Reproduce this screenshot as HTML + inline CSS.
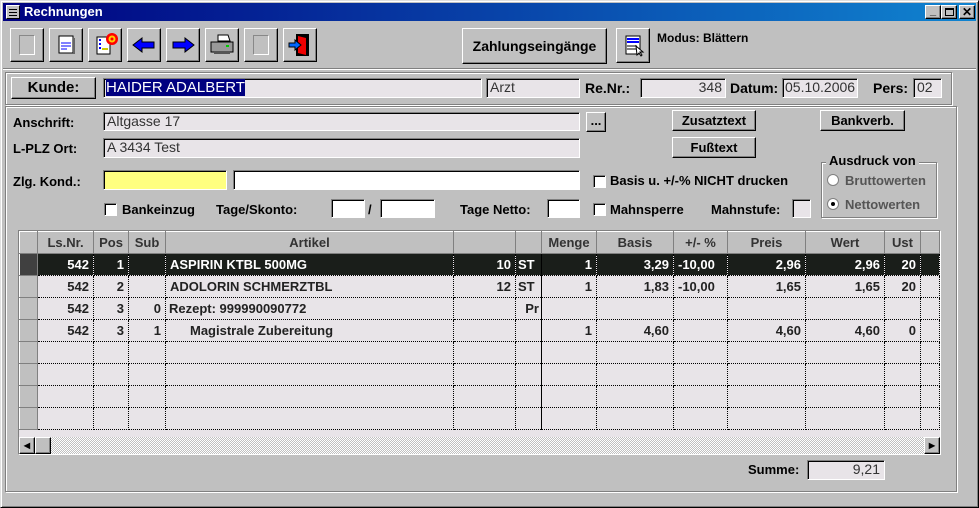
<!DOCTYPE html>
<html><head><meta charset="utf-8"><style>
*{box-sizing:border-box;margin:0;padding:0}
body{width:979px;height:508px;background:#c0c0c0;font-family:"Liberation Sans",Arial,sans-serif;font-size:13px;font-weight:bold;color:#000;position:relative;overflow:hidden}
.a{position:absolute}
.win{left:0;top:0;width:979px;height:508px;border:1px solid #dfdfdf;border-right-color:#000;border-bottom-color:#000;box-shadow:inset 1px 1px #fff,inset -1px -1px #808080}
.title{left:3px;top:3px;width:973px;height:18px;background:linear-gradient(90deg,#000080,#1084d0);color:#fff;font-weight:bold;font-size:13px;line-height:18px;padding-left:21px}
.btn{background:#c0c0c0;border:1px solid #fff;border-right-color:#000;border-bottom-color:#000;box-shadow:inset -1px -1px #808080;text-align:center}
.fld{background:#e8e4e8;border:1px solid #808080;border-right-color:#fff;border-bottom-color:#fff;box-shadow:inset 1px 1px #000;padding-left:3px;line-height:17px;white-space:nowrap;overflow:hidden;color:#333;font-weight:normal}
.grp{border:1px solid #808080;box-shadow:1px 1px #fff,inset 1px 1px #fff}
.cb{width:13px;height:13px;background:#fff;border:1px solid #808080;border-right-color:#fff;border-bottom-color:#fff;box-shadow:inset 1px 1px #000}
table{border-collapse:collapse;table-layout:fixed;font-size:13px}
td{height:22px;border-right:1px dotted #000;border-bottom:1px dotted #000;padding:0 4px;white-space:nowrap;overflow:hidden;color:#222}
th{height:22px;background:#c0c0c0;border:1px solid #fff;border-right-color:#808080;border-bottom-color:#808080;color:#333}
tr.sel td{background:#1a1e1a;color:#fff}
td.r{text-align:right}
td.h{background:#c0c0c0;border:1px solid #fff;border-right-color:#808080;border-bottom-color:#808080}
tr.sel td.h{background:#404040}
</style></head><body>
<div class="a win"></div>
<div class="a title">Rechnungen</div>
<div class="a" style="left:6px;top:5px;width:14px;height:14px;background:#c0c0c0;border:1px solid #fff;border-right-color:#000;border-bottom-color:#000"><div style="margin:3px 2px;height:1px;background:#000;box-shadow:0 3px #000,0 6px #000"></div></div>
<div class="a btn" style="left:925px;top:5px;width:16px;height:14px;font-size:11px;line-height:10px;font-weight:bold">_</div>
<div class="a btn" style="left:941px;top:5px;width:16px;height:14px"><div style="margin:2px 3px;width:9px;height:8px;border:1px solid #000;border-top-width:2px"></div></div>
<div class="a btn" style="left:959px;top:5px;width:16px;height:14px;font-size:12px;line-height:12px;font-weight:bold">✕</div>

<!-- toolbar -->
<div class="a btn" style="left:10px;top:28px;width:34px;height:34px"><div style="margin:6px 8px;width:16px;height:20px;border:1px solid #888;border-right-color:#fff;border-bottom-color:#fff"></div></div>
<div class="a btn" style="left:49px;top:28px;width:34px;height:34px"><svg width="32" height="32"><rect x="9" y="7" width="14" height="17" fill="#fff" stroke="#000"/><path d="M11 14h10M11 17h10M11 20h6" stroke="#00f"/><rect x="23" y="9" width="2" height="16" fill="#666"/></svg></div>
<div class="a btn" style="left:88px;top:28px;width:34px;height:34px"><svg width="32" height="32"><rect x="8" y="8" width="13" height="17" fill="#fff" stroke="#000"/><path d="M10 11h2M10 15h2M10 19h2" stroke="#00f" stroke-width="2"/><path d="M13 20h6" stroke="#cc0" stroke-width="2"/><circle cx="23" cy="10" r="6" fill="#f00"/><circle cx="23" cy="10" r="3.5" fill="#fc0"/><circle cx="23" cy="10" r="1.5" fill="#f00"/></svg></div>
<div class="a btn" style="left:127px;top:28px;width:34px;height:34px"><svg width="32" height="32"><path d="M5 16l9-7v4h12v6H14v4z" fill="#00f" stroke="#000"/></svg></div>
<div class="a btn" style="left:166px;top:28px;width:34px;height:34px"><svg width="32" height="32"><path d="M27 16l-9-7v4H6v6h12v4z" fill="#00f" stroke="#000"/></svg></div>
<div class="a btn" style="left:205px;top:28px;width:34px;height:34px"><svg width="32" height="32"><path d="M12 6h10l2 6H12z" fill="#fff" stroke="#000"/><rect x="5" y="13" width="22" height="10" fill="#999" stroke="#000"/><rect x="8" y="22" width="16" height="3" fill="#555"/><rect x="20" y="16" width="3" height="2" fill="#0c0"/></svg></div>
<div class="a btn" style="left:244px;top:28px;width:34px;height:34px"><div style="margin:6px 8px;width:16px;height:20px;border:1px solid #888;border-right-color:#fff;border-bottom-color:#fff"></div></div>
<div class="a btn" style="left:283px;top:28px;width:34px;height:34px"><svg width="32" height="32"><rect x="12" y="5" width="13" height="22" fill="#000"/><path d="M14 7l8 2v17l-8-2z" fill="#e00"/><path d="M5 14h6v-3l6 5-6 5v-3H5z" fill="#06f" stroke="#000"/></svg></div>

<div class="a btn" style="left:462px;top:28px;width:145px;height:36px;line-height:34px;font-size:14px">Zahlungseingänge</div>
<div class="a btn" style="left:616px;top:28px;width:34px;height:35px"><svg width="32" height="32"><rect x="9" y="7" width="14" height="18" fill="#fff" stroke="#000"/><path d="M10 10h12M10 13h12" stroke="#00f" stroke-width="2"/><path d="M10 17h10M10 20h10" stroke="#000"/><path d="M19 17l7 6-3 0 2 3-1 1-2-3-2 2z" fill="#fff" stroke="#000"/></svg></div>
<div class="a" style="left:657px;top:31px;font-size:12px;font-weight:bold">Modus: Blättern</div>

<div class="a" style="left:3px;top:68px;width:973px;height:2px;border-top:1px solid #808080;border-bottom:1px solid #fff"></div>

<!-- header panel -->
<div class="a grp" style="left:5px;top:72px;width:947px;height:33px"></div>
<div class="a btn" style="left:11px;top:77px;width:85px;height:22px;line-height:20px;font-size:15px">Kunde:</div>
<div class="a fld" style="left:103px;top:78px;width:379px;height:20px;font-size:15px;padding-left:2px"><span style="background:#000080;color:#fff">HAIDER ADALBERT</span></div>
<div class="a fld" style="left:486px;top:78px;width:94px;height:20px;font-size:14px">Arzt</div>
<div class="a" style="left:585px;top:80px;font-size:14px">Re.Nr.:</div>
<div class="a fld" style="left:640px;top:78px;width:86px;height:20px;text-align:right;padding-right:3px;font-size:14px">348</div>
<div class="a" style="left:730px;top:80px;font-size:14px">Datum:</div>
<div class="a fld" style="left:782px;top:78px;width:76px;height:20px;font-size:14px;padding-left:2px">05.10.2006</div>
<div class="a" style="left:873px;top:80px;font-size:14px">Pers:</div>
<div class="a fld" style="left:913px;top:78px;width:29px;height:20px;font-size:14px">02</div>

<!-- main panel -->
<div class="a grp" style="left:5px;top:106px;width:952px;height:386px"></div>
<div class="a" style="left:13px;top:115px">Anschrift:</div>
<div class="a fld" style="left:103px;top:112px;width:477px;height:19px;font-size:14px">Altgasse 17</div>
<div class="a btn" style="left:586px;top:112px;width:20px;height:20px;line-height:16px">...</div>
<div class="a" style="left:13px;top:141px">L-PLZ Ort:</div>
<div class="a fld" style="left:103px;top:138px;width:477px;height:20px;font-size:14px">A 3434 Test</div>
<div class="a btn" style="left:672px;top:110px;width:84px;height:21px;line-height:19px">Zusatztext</div>
<div class="a btn" style="left:820px;top:110px;width:85px;height:21px;line-height:19px">Bankverb.</div>
<div class="a btn" style="left:672px;top:137px;width:84px;height:21px;line-height:19px">Fußtext</div>
<div class="a" style="left:13px;top:174px">Zlg. Kond.:</div>
<div class="a fld" style="left:103px;top:170px;width:124px;height:20px;background:#ffff80"></div>
<div class="a fld" style="left:233px;top:170px;width:347px;height:20px;background:#fff"></div>
<div class="a cb" style="left:593px;top:175px"></div>
<div class="a" style="left:610px;top:173px">Basis u. +/-% NICHT drucken</div>
<div class="a grp" style="left:821px;top:162px;width:116px;height:56px"></div>
<div class="a" style="left:826px;top:153px;background:#c0c0c0;padding:0 3px">Ausdruck von</div>
<div class="a" style="left:827px;top:174px;width:12px;height:12px;border-radius:50%;background:#fff;border:1px solid #808080"></div>
<div class="a" style="left:845px;top:173px;color:#555">Bruttowerten</div>
<div class="a" style="left:827px;top:198px;width:12px;height:12px;border-radius:50%;background:#fff;border:1px solid #808080"><div style="margin:3px;width:4px;height:4px;border-radius:50%;background:#000"></div></div>
<div class="a" style="left:845px;top:197px;color:#555">Nettowerten</div>

<div class="a cb" style="left:104px;top:203px"></div>
<div class="a" style="left:122px;top:202px">Bankeinzug</div>
<div class="a" style="left:216px;top:202px">Tage/Skonto:</div>
<div class="a fld" style="left:331px;top:199px;width:34px;height:19px;background:#fff"></div>
<div class="a" style="left:368px;top:202px">/</div>
<div class="a fld" style="left:380px;top:199px;width:55px;height:19px;background:#fff"></div>
<div class="a" style="left:460px;top:202px">Tage Netto:</div>
<div class="a fld" style="left:547px;top:199px;width:33px;height:19px;background:#fff"></div>
<div class="a cb" style="left:593px;top:203px"></div>
<div class="a" style="left:610px;top:202px">Mahnsperre</div>
<div class="a" style="left:711px;top:202px">Mahnstufe:</div>
<div class="a fld" style="left:792px;top:199px;width:19px;height:19px"></div>

<!-- grid -->
<div class="a" style="left:18px;top:230px;width:923px;height:225px;border:1px solid #808080;border-right-color:#fff;border-bottom-color:#fff;background:#e8e4e8;overflow:hidden">
<table style="width:920px">
<colgroup><col style="width:18px"><col style="width:56px"><col style="width:35px"><col style="width:37px"><col style="width:288px"><col style="width:62px"><col style="width:26px"><col style="width:55px"><col style="width:77px"><col style="width:54px"><col style="width:78px"><col style="width:79px"><col style="width:36px"><col style="width:19px"></colgroup>
<tr><th></th><th>Ls.Nr.</th><th>Pos</th><th>Sub</th><th>Artikel</th><th></th><th></th><th style="border-left:1px solid #000">Menge</th><th>Basis</th><th>+/- %</th><th>Preis</th><th>Wert</th><th>Ust</th><th></th></tr>
<tr class="sel"><td class="h"></td><td class="r">542</td><td class="r">1</td><td></td><td>ASPIRIN KTBL 500MG</td><td class="r">10</td><td style="padding:0 2px">ST</td><td class="r" style="border-left:1px solid #000">1</td><td class="r">3,29</td><td>-10,00</td><td class="r">2,96</td><td class="r">2,96</td><td class="r">20</td><td></td></tr>
<tr><td class="h"></td><td class="r">542</td><td class="r">2</td><td></td><td>ADOLORIN SCHMERZTBL</td><td class="r">12</td><td style="padding:0 2px">ST</td><td class="r" style="border-left:1px solid #000">1</td><td class="r">1,83</td><td>-10,00</td><td class="r">1,65</td><td class="r">1,65</td><td class="r">20</td><td></td></tr>
<tr><td class="h"></td><td class="r">542</td><td class="r">3</td><td class="r">0</td><td style="padding-left:3px">Rezept: 999990090772</td><td></td><td class="r" style="padding:0 2px">Pr</td><td style="border-left:1px solid #000"></td><td></td><td></td><td></td><td></td><td></td><td></td></tr>
<tr><td class="h"></td><td class="r">542</td><td class="r">3</td><td class="r">1</td><td style="padding-left:24px">Magistrale Zubereitung</td><td></td><td></td><td class="r" style="border-left:1px solid #000">1</td><td class="r">4,60</td><td></td><td class="r">4,60</td><td class="r">4,60</td><td class="r">0</td><td></td></tr>
<tr><td class="h"></td><td></td><td></td><td></td><td></td><td></td><td></td><td style="border-left:1px solid #000"></td><td></td><td></td><td></td><td></td><td></td><td></td></tr>
<tr><td class="h"></td><td></td><td></td><td></td><td></td><td></td><td></td><td style="border-left:1px solid #000"></td><td></td><td></td><td></td><td></td><td></td><td></td></tr>
<tr><td class="h"></td><td></td><td></td><td></td><td></td><td></td><td></td><td style="border-left:1px solid #000"></td><td></td><td></td><td></td><td></td><td></td><td></td></tr>
<tr><td class="h"></td><td></td><td></td><td></td><td></td><td></td><td></td><td style="border-left:1px solid #000"></td><td></td><td></td><td></td><td></td><td></td><td></td></tr>
</table>
<div class="a" style="left:0;top:206px;width:921px;height:17px;background:repeating-conic-gradient(#c0c0c0 0 25%,#fff 0 50%) 0 0/2px 2px"></div>
<div class="a btn" style="left:0;top:206px;width:16px;height:17px;font-size:8px;line-height:15px">◀</div>
<div class="a btn" style="left:16px;top:206px;width:16px;height:17px"></div>
<div class="a btn" style="left:905px;top:206px;width:16px;height:17px;font-size:8px;line-height:15px">▶</div>
</div>

<div class="a" style="left:748px;top:462px">Summe:</div>
<div class="a fld" style="left:807px;top:460px;width:78px;height:20px;text-align:right;padding-right:4px;font-size:14px">9,21</div>
</body></html>
